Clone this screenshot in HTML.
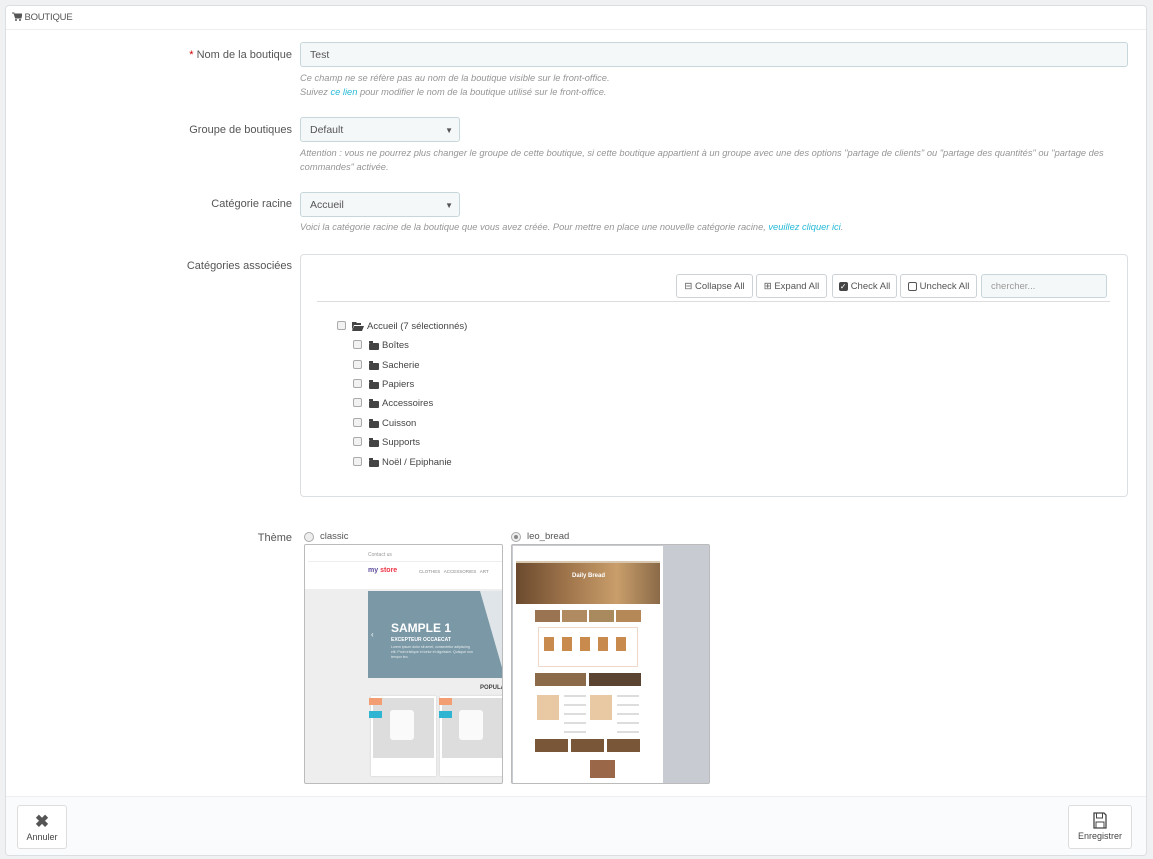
<!DOCTYPE html>
<html><head><meta charset="utf-8"><style>
*{box-sizing:border-box;margin:0;padding:0}
body{width:1153px;height:859px;background:#eff1f2;font-family:"Liberation Sans",sans-serif;color:#555;position:relative;overflow:hidden;font-size:11px}
.a{position:absolute}
.panel{left:5px;top:5px;width:1142px;height:851px;background:#fff;border:1px solid #dcdfe2;border-radius:4px}
.lbl{text-align:right;width:200px;left:92px;font-size:11px;color:#555}
.inp{background:#f5f8f9;border:1px solid #c7d6db;border-radius:3px;font-size:10.5px;color:#555;padding:0 9px;display:flex;align-items:center}
.help{font-style:italic;color:#959595;font-size:9.3px;line-height:14px;left:300px;width:830px}
.help b{font-weight:normal;color:#25b9d7}
.arr{position:absolute;right:6px;top:8px;font-size:8px;color:#555}
.btn{border:1px solid #ccd2d6;border-radius:3px;background:#fff;font-size:9.5px;color:#555;display:flex;align-items:center;justify-content:center;height:24px;top:274px}
.cb{width:9px;height:9px;border:1px solid #aaa;border-radius:2px;background:#f2f2f2}
.fold{width:10px;height:7px;background:#444;border-radius:1px}
.fold:before{content:"";position:absolute;left:0;top:-2px;width:4px;height:2px;background:#444}
.ti{font-size:9.5px;color:#444}
</style></head><body>
<div class="a panel"></div>
<div class="a" style="left:6px;top:29px;width:1140px;height:1px;background:#eee"></div>
<div class="a" style="left:12px;top:12px;font-size:9.5px;color:#555;letter-spacing:-0.2px">
<svg width="10" height="9" viewBox="0 0 10 9" style="vertical-align:-1px"><path d="M0 1h2l1.5 5h5.5l1-4H3" fill="#555" stroke="#555"/><circle cx="4" cy="8" r="1" fill="#555"/><circle cx="8" cy="8" r="1" fill="#555"/></svg> BOUTIQUE</div>

<div class="a lbl" style="top:49px"><span style="color:#c00">*</span> Nom de la boutique</div>
<div class="a inp" style="left:300px;top:42px;width:828px;height:25px">Test</div>
<div class="a help" style="top:71px">Ce champ ne se réfère pas au nom de la boutique visible sur le front-office.<br>Suivez <b>ce lien</b> pour modifier le nom de la boutique utilisé sur le front-office.</div>

<div class="a lbl" style="top:124px">Groupe de boutiques</div>
<div class="a inp" style="left:300px;top:117px;width:160px;height:25px">Default<span class="arr">▼</span></div>
<div class="a help" style="top:146px">Attention : vous ne pourrez plus changer le groupe de cette boutique, si cette boutique appartient à un groupe avec une des options "partage de clients" ou "partage des quantités" ou "partage des commandes" activée.</div>

<div class="a lbl" style="top:198px">Catégorie racine</div>
<div class="a inp" style="left:300px;top:192px;width:160px;height:25px">Accueil<span class="arr">▼</span></div>
<div class="a help" style="top:220px">Voici la catégorie racine de la boutique que vous avez créée. Pour mettre en place une nouvelle catégorie racine, <b>veuillez cliquer ici</b>.</div>

<div class="a lbl" style="top:260px">Catégories associées</div>
<div class="a" style="left:300px;top:254px;width:828px;height:243px;border:1px solid #dcdfe2;border-radius:4px"></div>
<div class="a btn" style="left:676px;width:77px">⊟ Collapse All</div>
<div class="a btn" style="left:756px;width:71px">⊞ Expand All</div>
<div class="a btn" style="left:832px;width:65px"><span style="display:inline-block;width:9px;height:9px;background:#444;border-radius:2px;color:#fff;font-size:8px;line-height:9px;text-align:center;margin-right:3px">✓</span>Check All</div>
<div class="a btn" style="left:900px;width:77px"><span style="display:inline-block;width:9px;height:9px;border:1px solid #555;border-radius:2px;margin-right:3px"></span>Uncheck All</div>
<div class="a inp" style="left:981px;top:274px;width:126px;height:24px;color:#999;font-size:9.5px">chercher...</div>
<div class="a" style="left:317px;top:301px;width:793px;height:1px;background:#ddd"></div>

<div class="a cb" style="left:337px;top:321px"></div>
<svg class="a" style="left:352px;top:322px" width="12" height="9" viewBox="0 0 12 9"><path d="M0 0h4l1 1h4v2H2L0 8z" fill="#444"/><path d="M2 4h10l-2 5H0z" fill="#444"/></svg>
<div class="a ti" style="left:367px;top:321px">Accueil (7 sélectionnés)</div>

<div class="a cb" style="left:353px;top:340px"></div><div class="a fold" style="left:369px;top:343px"></div><div class="a ti" style="left:382px;top:340px">Boîtes</div>
<div class="a cb" style="left:353px;top:360px"></div><div class="a fold" style="left:369px;top:363px"></div><div class="a ti" style="left:382px;top:360px">Sacherie</div>
<div class="a cb" style="left:353px;top:379px"></div><div class="a fold" style="left:369px;top:382px"></div><div class="a ti" style="left:382px;top:379px">Papiers</div>
<div class="a cb" style="left:353px;top:398px"></div><div class="a fold" style="left:369px;top:401px"></div><div class="a ti" style="left:382px;top:398px">Accessoires</div>
<div class="a cb" style="left:353px;top:418px"></div><div class="a fold" style="left:369px;top:421px"></div><div class="a ti" style="left:382px;top:418px">Cuisson</div>
<div class="a cb" style="left:353px;top:437px"></div><div class="a fold" style="left:369px;top:440px"></div><div class="a ti" style="left:382px;top:437px">Supports</div>
<div class="a cb" style="left:353px;top:457px"></div><div class="a fold" style="left:369px;top:460px"></div><div class="a ti" style="left:382px;top:457px">Noël / Epiphanie</div>

<div class="a lbl" style="top:532px">Thème</div>
<div class="a" style="left:304px;top:532px;width:10px;height:10px;border:1px solid #aaa;border-radius:50%;background:#eee"></div>
<div class="a ti" style="left:320px;top:531px;color:#555">classic</div>
<div class="a" style="left:511px;top:532px;width:10px;height:10px;border:1px solid #aaa;border-radius:50%;background:#eee"><div style="margin:2px;width:4px;height:4px;border-radius:50%;background:#888"></div></div>
<div class="a ti" style="left:527px;top:531px;color:#555">leo_bread</div>

<!-- classic thumb -->
<div class="a" style="left:304px;top:544px;width:199px;height:240px;border:1px solid #bbb;border-radius:2px;background:#eee;overflow:hidden">
 <div class="a" style="left:0;top:0;width:197px;height:44px;background:#fff"></div>
 <div class="a" style="left:3px;top:16px;width:194px;height:1px;background:#eee"></div>
 <div class="a" style="left:63px;top:7px;font-size:5px;color:#999">Contact us</div>
 <div class="a" style="left:63px;top:22px;font-size:7px;color:#5a4b9a;font-weight:bold">my <span style="color:#e34">store</span></div>
 <div class="a" style="left:114px;top:24px;font-size:4.5px;color:#888">CLOTHES &nbsp; ACCESSORIES &nbsp; ART</div>
 <div class="a" style="left:63px;top:46px;width:135px;height:87px;background:#7a98a5"></div>
 <div class="a" style="left:175px;top:46px;width:0;height:0;border-left:25px solid transparent;border-top:87px solid #dfe5e8"></div>
 <div class="a" style="left:86px;top:76px;font-size:12px;font-weight:bold;color:#fff">SAMPLE 1</div>
 <div class="a" style="left:86px;top:92px;font-size:5px;font-weight:bold;color:#fff">EXCEPTEUR OCCAECAT</div>
 <div class="a" style="left:86px;top:100px;width:85px;font-size:3.5px;line-height:5px;color:#e8eef0">Lorem ipsum dolor sit amet, consectetur adipiscing elit. Proin tristique in tortor et dignissim. Quisque non tempor leo.</div>
 <div class="a" style="left:66px;top:85px;font-size:8px;color:#fff">‹</div>
 <div class="a" style="left:175px;top:140px;font-size:6px;font-weight:bold;color:#444">POPULA</div>
 <div class="a" style="left:66px;top:151px;width:65px;height:80px;background:#fff;box-shadow:0 0 2px #ccc"><div style="margin:2px;height:60px;background:#ddd"></div></div>
 <div class="a" style="left:135px;top:151px;width:65px;height:80px;background:#fff;box-shadow:0 0 2px #ccc"><div style="margin:2px;height:60px;background:#ddd"></div></div>
 <div class="a" style="left:85px;top:165px;width:24px;height:30px;background:#fafafa;border-radius:3px"></div>
 <div class="a" style="left:154px;top:165px;width:24px;height:30px;background:#fafafa;border-radius:3px"></div>
 <div class="a" style="left:64px;top:153px;width:13px;height:7px;background:#f39d72"></div>
 <div class="a" style="left:134px;top:153px;width:13px;height:7px;background:#f39d72"></div>
 <div class="a" style="left:64px;top:166px;width:13px;height:7px;background:#2fb5d2"></div>
 <div class="a" style="left:134px;top:166px;width:13px;height:7px;background:#2fb5d2"></div>
</div>

<!-- leo thumb -->
<div class="a" style="left:511px;top:544px;width:199px;height:240px;border:1px solid #bbb;border-radius:2px;background:#c8cbd1;overflow:hidden">
 <div class="a" style="left:1px;top:1px;width:150px;height:238px;background:#fff"></div>
 <div class="a" style="left:4px;top:18px;width:144px;height:41px;background:linear-gradient(90deg,#6b4a2e,#a57a4f 40%,#c99e6b 70%,#8a6a48)"></div>
 <div class="a" style="left:60px;top:28px;font-size:6px;font-weight:bold;color:#fff">Daily Bread</div>
 <div class="a" style="left:4px;top:16px;width:144px;height:2px;background:#d8c8b0"></div>
 <div class="a" style="left:23px;top:65px;width:25px;height:12px;background:#9a7452"></div>
 <div class="a" style="left:50px;top:65px;width:25px;height:12px;background:#b08a60"></div>
 <div class="a" style="left:77px;top:65px;width:25px;height:12px;background:#a88a5e"></div>
 <div class="a" style="left:104px;top:65px;width:25px;height:12px;background:#b58858"></div>
 <div class="a" style="left:26px;top:82px;width:100px;height:40px;border:1px solid #f0d8c8"></div>
 <div class="a" style="left:32px;top:92px;width:88px;height:14px;background:repeating-linear-gradient(90deg,#c98a4e 0 10px,#fff 10px 18px)"></div>
 <div class="a" style="left:23px;top:128px;width:51px;height:13px;background:#8a6a48"></div>
 <div class="a" style="left:77px;top:128px;width:52px;height:13px;background:#5a4330"></div>
 <div class="a" style="left:25px;top:150px;width:22px;height:25px;background:#e8c9a3"></div>
 <div class="a" style="left:78px;top:150px;width:22px;height:25px;background:#e8c9a3"></div>
 <div class="a" style="left:52px;top:150px;width:22px;height:40px;background:repeating-linear-gradient(180deg,#ddd 0 2px,#fff 2px 9px)"></div>
 <div class="a" style="left:105px;top:150px;width:22px;height:40px;background:repeating-linear-gradient(180deg,#ddd 0 2px,#fff 2px 9px)"></div>
 <div class="a" style="left:23px;top:194px;width:33px;height:13px;background:#7a5638"></div>
 <div class="a" style="left:59px;top:194px;width:33px;height:13px;background:#7a5638"></div>
 <div class="a" style="left:95px;top:194px;width:33px;height:13px;background:#7a5638"></div>
 <div class="a" style="left:78px;top:215px;width:25px;height:18px;background:#9a6848"></div>
</div>

<!-- footer -->
<div class="a" style="left:6px;top:796px;width:1140px;height:59px;background:#fafbfc;border-top:1px solid #eee;border-radius:0 0 4px 4px"></div>
<div class="a" style="left:17px;top:805px;width:50px;height:44px;border:1px solid #ddd;border-radius:3px;background:#fff;text-align:center;font-size:9px;color:#444">
 <div style="font-size:17px;font-weight:bold;color:#555;line-height:20px;margin-top:6px">✖</div>Annuler</div>
<div class="a" style="left:1068px;top:805px;width:64px;height:44px;border:1px solid #ddd;border-radius:3px;background:#fff;text-align:center;font-size:9px;color:#444">
 <svg width="14" height="17" viewBox="0 0 14 17" style="margin-top:6px"><path d="M1 1h10l2 2v13H1z" fill="none" stroke="#444" stroke-width="1.3"/><rect x="3.5" y="1" width="6" height="5" fill="none" stroke="#444"/><rect x="3" y="10" width="8" height="6" fill="none" stroke="#444"/></svg><br>Enregistrer</div>
</body></html>
